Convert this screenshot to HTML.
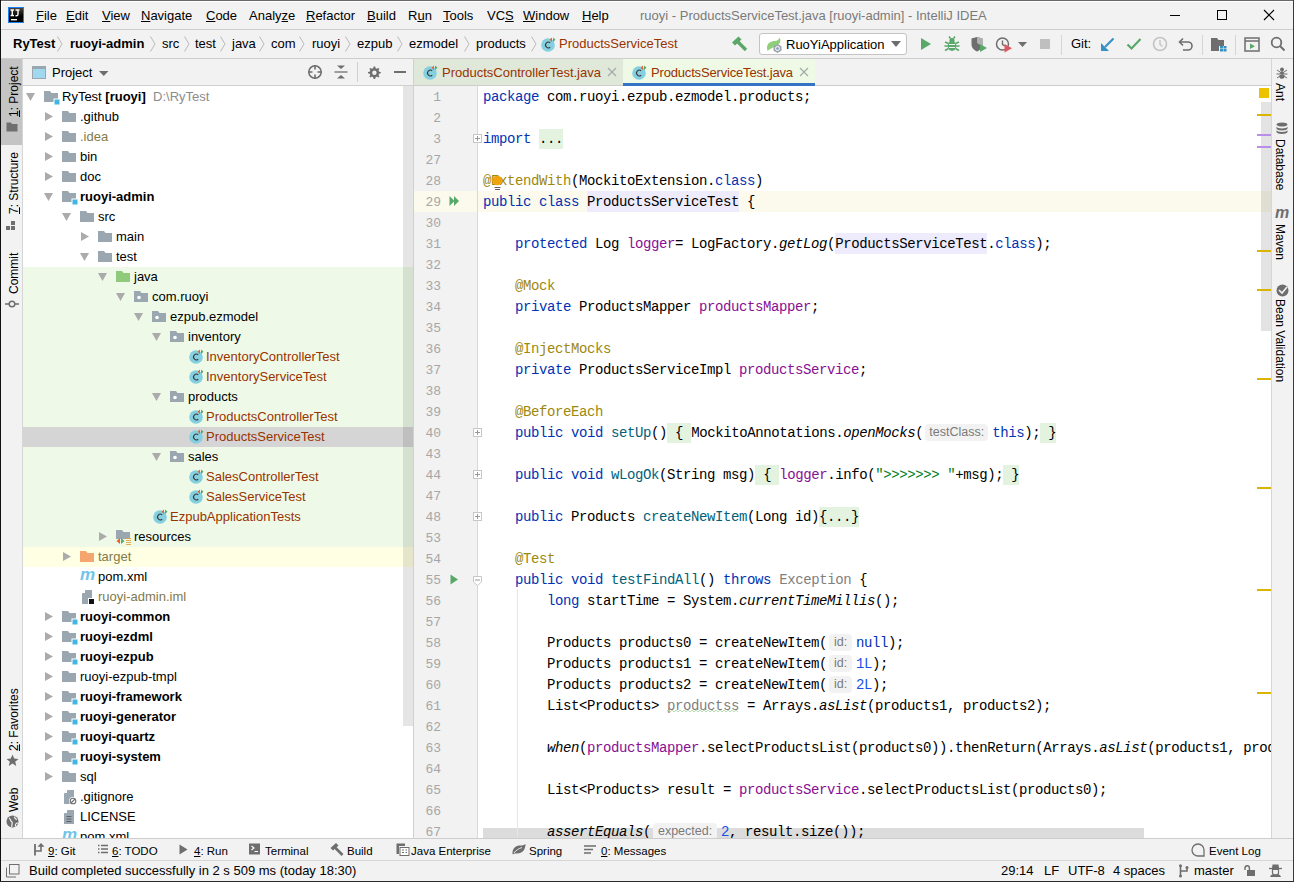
<!DOCTYPE html><html><head><meta charset="utf-8"><style>
*{margin:0;padding:0;box-sizing:border-box}
html,body{width:1294px;height:882px;overflow:hidden;background:#f2f2f2}
body{position:relative;font-family:"Liberation Sans",sans-serif;font-size:13px;color:#000}
.a{position:absolute}
.t{position:absolute;white-space:pre;line-height:16px;font-size:13px}
.b{font-weight:bold}
.m{font-family:"Liberation Mono",monospace}
.cl{position:absolute;left:69px;white-space:pre;font-family:"Liberation Mono",monospace;font-size:14px;letter-spacing:-0.4px;line-height:21px;height:21px}
.k{color:#0033b3}.an{color:#9e880d}.f{color:#871094}.md{color:#00627a}.s{color:#067d17}.n{color:#1750eb}.i{font-style:italic}.g{color:#808080}
.fd{background:#e4f2e0;display:inline-block;height:20px;vertical-align:top}
.hl{background:#edebfc;display:inline-block;height:21px;vertical-align:top;position:relative;top:-1px}.hl>span{position:relative;top:1px}
.ih{display:inline-block;vertical-align:top;margin:1px 4px 0 2px;height:17px;line-height:17px;background:#f2f2f2;border-radius:4px;color:#7a7a7a;font-family:"Liberation Sans",sans-serif;font-size:12.5px;letter-spacing:0;text-align:center}
.ln{position:absolute;left:0;width:27px;text-align:right;font-family:"Liberation Mono",monospace;font-size:13px;color:#a6a6a6;line-height:21px}

</style></head><body>
<div class="a" style="left:0px;top:0px;width:1294px;height:1px;background:#696969;"></div>
<div class="a" style="left:0px;top:0px;width:1px;height:882px;background:#121212;"></div>
<div class="a" style="left:1293px;top:0px;width:1px;height:882px;background:#3a3a3a;"></div>
<div class="a" style="left:0px;top:881px;width:1294px;height:1px;background:#2a2a2a;"></div>
<div class="a" style="left:1px;top:1px;width:1292px;height:1px;background:#ffffff;"></div>
<div class="a" style="left:1px;top:1px;width:1px;height:29px;background:#ffffff;"></div>
<div class="a" style="left:1px;top:29px;width:1292px;height:1px;background:#cdcdcd;"></div>
<div class="a" style="left:8px;top:7px;width:16px;height:16px;background:linear-gradient(#4a4038,#000 60%);border:1px solid #1a7ff0"></div>
<svg class="a" style="left:9px;top:8px" width="14" height="14"><path d="M1.5 2H5M3.25 2V7.5M1.5 7.5H5M6.5 2H10.5M9 2V6.2Q9 7.8 7.2 7.8H6.5" fill="none" stroke="#fff" stroke-width="1.4"/><rect x="2" y="11" width="6" height="1.4" fill="#fff"/></svg>
<div class="t" style="left:36px;top:8px;"><u>F</u>ile</div>
<div class="t" style="left:66px;top:8px;"><u>E</u>dit</div>
<div class="t" style="left:102px;top:8px;"><u>V</u>iew</div>
<div class="t" style="left:141px;top:8px;"><u>N</u>avigate</div>
<div class="t" style="left:206px;top:8px;"><u>C</u>ode</div>
<div class="t" style="left:249px;top:8px;">Analy<u>z</u>e</div>
<div class="t" style="left:306px;top:8px;"><u>R</u>efactor</div>
<div class="t" style="left:367px;top:8px;"><u>B</u>uild</div>
<div class="t" style="left:408px;top:8px;">R<u>u</u>n</div>
<div class="t" style="left:443px;top:8px;"><u>T</u>ools</div>
<div class="t" style="left:487px;top:8px;">VC<u>S</u></div>
<div class="t" style="left:523px;top:8px;"><u>W</u>indow</div>
<div class="t" style="left:582px;top:8px;"><u>H</u>elp</div>
<div class="t" style="left:640px;top:8px;color:#7a7a7a">ruoyi - ProductsServiceTest.java [ruoyi-admin] - IntelliJ IDEA</div>
<div class="a" style="left:1170px;top:15px;width:10px;height:1px;background:#000;"></div>
<div class="a" style="left:1217px;top:10px;width:10px;height:10px;border:1px solid #000"></div>
<svg class="a" style="left:1262px;top:8px" width="14" height="14"><path d="M2 2L12 12M12 2L2 12" stroke="#000" stroke-width="1.2"/></svg>
<div class="a" style="left:1px;top:58px;width:1292px;height:1px;background:#cdcdcd;"></div>
<div class="t" style="left:13px;top:36px;font-weight:bold">RyTest</div>
<div class="t" style="left:70px;top:36px;font-weight:bold">ruoyi-admin</div>
<div class="t" style="left:162px;top:36px;">src</div>
<div class="t" style="left:195px;top:36px;">test</div>
<div class="t" style="left:232px;top:36px;">java</div>
<div class="t" style="left:271px;top:36px;">com</div>
<div class="t" style="left:312px;top:36px;">ruoyi</div>
<div class="t" style="left:357px;top:36px;">ezpub</div>
<div class="t" style="left:409px;top:36px;">ezmodel</div>
<div class="t" style="left:476px;top:36px;">products</div>
<svg class="a" style="left:57px;top:36px" width="6" height="16"><path d="M0.5 0.5L5 8L0.5 15.5" fill="none" stroke="#b9b9b9" stroke-width="1"/></svg>
<svg class="a" style="left:150px;top:36px" width="6" height="16"><path d="M0.5 0.5L5 8L0.5 15.5" fill="none" stroke="#b9b9b9" stroke-width="1"/></svg>
<svg class="a" style="left:184px;top:36px" width="6" height="16"><path d="M0.5 0.5L5 8L0.5 15.5" fill="none" stroke="#b9b9b9" stroke-width="1"/></svg>
<svg class="a" style="left:220px;top:36px" width="6" height="16"><path d="M0.5 0.5L5 8L0.5 15.5" fill="none" stroke="#b9b9b9" stroke-width="1"/></svg>
<svg class="a" style="left:259px;top:36px" width="6" height="16"><path d="M0.5 0.5L5 8L0.5 15.5" fill="none" stroke="#b9b9b9" stroke-width="1"/></svg>
<svg class="a" style="left:299px;top:36px" width="6" height="16"><path d="M0.5 0.5L5 8L0.5 15.5" fill="none" stroke="#b9b9b9" stroke-width="1"/></svg>
<svg class="a" style="left:345px;top:36px" width="6" height="16"><path d="M0.5 0.5L5 8L0.5 15.5" fill="none" stroke="#b9b9b9" stroke-width="1"/></svg>
<svg class="a" style="left:397px;top:36px" width="6" height="16"><path d="M0.5 0.5L5 8L0.5 15.5" fill="none" stroke="#b9b9b9" stroke-width="1"/></svg>
<svg class="a" style="left:464px;top:36px" width="6" height="16"><path d="M0.5 0.5L5 8L0.5 15.5" fill="none" stroke="#b9b9b9" stroke-width="1"/></svg>
<svg class="a" style="left:531px;top:36px" width="6" height="16"><path d="M0.5 0.5L5 8L0.5 15.5" fill="none" stroke="#b9b9b9" stroke-width="1"/></svg>
<svg class="a" style="left:541px;top:36px" width="16" height="16"><circle cx="7" cy="9" r="6.8" fill="#84cfe0"/><path d="M9.2 6.7A2.9 2.9 0 1 0 9.2 11.3" fill="none" stroke="#3a3a3a" stroke-width="1.1"/><path d="M11 1.5L8.6 3.8L11 6Z" fill="#e5642e"/><path d="M12 1.5L14.5 3.8L12 6Z" fill="#59a869"/></svg>
<div class="t" style="left:559px;top:36px;color:#993300">ProductsServiceTest</div>
<svg class="a" style="left:731px;top:36px" width="17" height="16"><path d="M1 6.5L7.5 0.5L10.5 3.5L4 9.5Z" fill="#59a869"/><path d="M6.5 5.5L15 14" stroke="#59a869" stroke-width="3.4"/></svg>
<div class="a" style="left:759px;top:33px;width:148px;height:22px;background:#fff;border:1px solid #c4c4c4;border-radius:3px"></div>
<svg class="a" style="left:766px;top:37px" width="18" height="16"><path d="M1 11C1 6 5 4 9 4C11 4 13 2.5 13.5 0.5C15 3 14.5 6 12.5 7.5C11 9 9 9.5 6 11C4 12 2.5 13 1.5 14Z" fill="#8fcf7a"/><path d="M11.5 7L15.5 9.3V13.7L11.5 16L7.5 13.7V9.3Z" fill="#9aa7b0"/><circle cx="11.5" cy="11.5" r="2" fill="none" stroke="#fff" stroke-width="1"/></svg>
<div class="t" style="left:786px;top:37px;">RuoYiApplication</div>
<svg class="a" style="left:891px;top:41px" width="10" height="6"><path d="M0 0H10L5 6Z" fill="#6e6e6e"/></svg>
<svg class="a" style="left:920px;top:37px" width="12" height="14"><path d="M1 1L11 7L1 13Z" fill="#59a869"/></svg>
<svg class="a" style="left:944px;top:36px" width="16" height="16"><ellipse cx="8" cy="10" rx="4.2" ry="5" fill="#59a869"/><circle cx="8" cy="4.5" r="2.6" fill="#59a869"/><path d="M1 6L4.5 7.5M15 6L11.5 7.5M0.5 10H4M15.5 10H12M1 14.5L4.5 12.5M15 14.5L11.5 12.5M5 0.5L6.5 2.5M11 0.5L9.5 2.5" stroke="#59a869" stroke-width="1.5"/><path d="M5 8.5H11M5 11.5H11" stroke="#f2f2f2" stroke-width="1"/></svg>
<svg class="a" style="left:970px;top:36px" width="18" height="17"><path d="M1.5 2.5L7 1L12.5 2.5V8C12.5 12 10 14 7 15.5C4 14 1.5 12 1.5 8Z" fill="#6e6e6e"/><path d="M7 1L12.5 2.5V8C12.5 9 12.3 9.5 12 10.3L7 7Z" fill="#b0b0b0"/><path d="M10 8L17 12L10 16Z" fill="#59a869"/></svg>
<svg class="a" style="left:995px;top:36px" width="18" height="17"><circle cx="7.5" cy="8" r="6" fill="none" stroke="#6e6e6e" stroke-width="1.5"/><path d="M7.5 4.5V8.5L10 10" fill="none" stroke="#6e6e6e" stroke-width="1.4"/><path d="M9.5 8L17 12.3L9.5 16.5Z" fill="#db5860"/></svg>
<svg class="a" style="left:1018px;top:42px" width="9" height="5"><path d="M0 0H9L4.5 5Z" fill="#6e6e6e"/></svg>
<div class="a" style="left:1040px;top:39px;width:10px;height:10px;background:#bfbfbf;"></div>
<div class="a" style="left:1061px;top:35px;width:1px;height:20px;background:#d5d5d5;"></div>
<div class="t" style="left:1071px;top:36px;">Git:</div>
<svg class="a" style="left:1100px;top:37px" width="15" height="15"><path d="M13.5 1.5L5 10" stroke="#3592c4" stroke-width="2.2"/><path d="M1 6L1 14L9 14Z" fill="#3592c4"/></svg>
<svg class="a" style="left:1126px;top:37px" width="16" height="14"><path d="M1.5 7.5L5.5 11.5L14.5 2" fill="none" stroke="#59a869" stroke-width="2.2"/></svg>
<svg class="a" style="left:1152px;top:36px" width="16" height="16"><circle cx="8" cy="8" r="6.5" fill="none" stroke="#c4c4c4" stroke-width="1.6"/><path d="M8 4V8.5L10.5 10.5" fill="none" stroke="#c4c4c4" stroke-width="1.4"/></svg>
<svg class="a" style="left:1178px;top:37px" width="16" height="15"><path d="M5 1.5L1.5 5L5 8.5" fill="none" stroke="#6e6e6e" stroke-width="1.6"/><path d="M2 5H10A4 4 0 0 1 10 13H5" fill="none" stroke="#6e6e6e" stroke-width="1.6"/></svg>
<div class="a" style="left:1202px;top:35px;width:1px;height:20px;background:#d5d5d5;"></div>
<svg class="a" style="left:1210px;top:37px" width="17" height="15"><path d="M1 1H7L8.5 3H14V9H9V14H1Z" fill="#6e6e6e"/><rect x="10" y="9" width="3" height="2.5" fill="#3592c4"/><rect x="13.5" y="9" width="3" height="2.5" fill="#3592c4"/><rect x="10" y="12" width="3" height="2.5" fill="#3592c4"/><rect x="13.5" y="12" width="3" height="2.5" fill="#3592c4"/></svg>
<div class="a" style="left:1235px;top:35px;width:1px;height:20px;background:#d5d5d5;"></div>
<svg class="a" style="left:1244px;top:37px" width="16" height="15"><rect x="1" y="1" width="14" height="13" fill="none" stroke="#6e6e6e" stroke-width="1.5"/><path d="M1 4H15" stroke="#6e6e6e" stroke-width="1.5"/><path d="M6 6.5L11 9.2L6 12Z" fill="#59a869"/></svg>
<svg class="a" style="left:1270px;top:36px" width="16" height="16"><circle cx="6.5" cy="6.5" r="4.8" fill="none" stroke="#6e6e6e" stroke-width="1.8"/><path d="M10 10L14.5 14.5" stroke="#6e6e6e" stroke-width="2"/></svg>
<div class="a" style="left:1px;top:59px;width:21px;height:779px;background:#f2f2f2;"></div>
<div class="a" style="left:22px;top:59px;width:1px;height:779px;background:#d6d6d6;"></div>
<div class="a" style="left:1px;top:59px;width:21px;height:86px;background:#c4c4c4;"></div>
<div class="t" style="left:5.5px;top:117px;font-size:12px;transform:rotate(-90deg);transform-origin:0 0;"><u>1</u>: Project</div>
<svg class="a" style="left:6px;top:122px" width="12" height="10"><path d="M0.5 0.5H5L6 2H11.5V9.5H0.5Z" fill="#6e6e6e"/></svg>
<div class="t" style="left:5.5px;top:214px;font-size:12px;transform:rotate(-90deg);transform-origin:0 0;"><u>7</u>: Structure</div>
<svg class="a" style="left:6px;top:221px" width="11" height="10"><rect x="0" y="5" width="4" height="4" fill="#6e6e6e"/><rect x="5" y="5" width="4" height="4" fill="#6e6e6e"/><rect x="5" y="0" width="4" height="4" fill="#6e6e6e"/></svg>
<div class="t" style="left:5.5px;top:294px;font-size:12px;transform:rotate(-90deg);transform-origin:0 0;">Commit</div>
<svg class="a" style="left:5px;top:299px" width="14" height="10"><circle cx="7" cy="5" r="2.8" fill="none" stroke="#6e6e6e" stroke-width="1.5"/><path d="M0 5H4M10 5H14" stroke="#6e6e6e" stroke-width="1.5"/></svg>
<div class="t" style="left:5.5px;top:751px;font-size:12px;transform:rotate(-90deg);transform-origin:0 0;"><u>2</u>: Favorites</div>
<svg class="a" style="left:6px;top:754px" width="13" height="13"><path d="M6.5 0.5L8.2 4.6L12.5 4.9L9.2 7.7L10.3 12L6.5 9.6L2.7 12L3.8 7.7L0.5 4.9L4.8 4.6Z" fill="#6e6e6e"/></svg>
<div class="t" style="left:5.5px;top:812px;font-size:12px;transform:rotate(-90deg);transform-origin:0 0;">Web</div>
<svg class="a" style="left:6px;top:815px" width="13" height="13"><circle cx="6.5" cy="6.5" r="6" fill="#6e6e6e"/><path d="M3 3C5 4 4 6 6 7C7 8 5 10 6 12M9 1.5C8 3 9.5 4 11 4.5M12 8C10 8 9 9.5 9.5 11.5" fill="none" stroke="#f2f2f2" stroke-width="1.2"/></svg>
<div class="a" style="left:23px;top:59px;width:390px;height:26px;background:#f2f2f2;"></div>
<div class="a" style="left:23px;top:85px;width:390px;height:1px;background:#d0d0d0;"></div>
<div class="a" style="left:23px;top:86px;width:390px;height:752px;background:#fff;"></div>
<div class="a" style="left:413px;top:59px;width:1px;height:779px;background:#d0d0d0;"></div>
<svg class="a" style="left:32px;top:66px" width="15" height="14"><rect x="0.5" y="0.5" width="13" height="12" fill="#9fd8ef" stroke="#9aa7b0"/><rect x="0.5" y="0.5" width="13" height="2.5" fill="#9aa7b0"/></svg>
<div class="t" style="left:52px;top:65px;">Project</div>
<svg class="a" style="left:99px;top:71px" width="10" height="6"><path d="M0 0H9.5L4.75 5Z" fill="#6e6e6e"/></svg>
<svg class="a" style="left:307px;top:64px" width="16" height="16"><circle cx="8" cy="8" r="6.2" fill="none" stroke="#6e6e6e" stroke-width="1.5"/><path d="M8 1V5.5M8 10.5V15M1 8H5.5M10.5 8H15" stroke="#6e6e6e" stroke-width="1.6"/></svg>
<svg class="a" style="left:334px;top:65px" width="14" height="14"><path d="M0.5 7H13.5" stroke="#6e6e6e" stroke-width="1.3"/><path d="M3 0.5H11L7 4Z M3 13.5H11L7 10Z" fill="#6e6e6e"/></svg>
<div class="a" style="left:357px;top:62px;width:1px;height:20px;background:#d0d0d0;"></div>
<svg class="a" style="left:367px;top:65px" width="14" height="14"><path d="M7 1.5L8.2 1.5L8.6 3.2L10 3.8L11.5 2.9L12.4 3.8L11.5 5.3L12.1 6.7L13.8 7.1V8.3L12.1 8.7L11.5 10.1L12.4 11.6L11.5 12.5L10 11.6L8.6 12.2L8.2 13.9H6.6L6.2 12.2L4.8 11.6L3.3 12.5L2.4 11.6L3.3 10.1L2.7 8.7L1 8.3V7.1L2.7 6.7L3.3 5.3L2.4 3.8L3.3 2.9L4.8 3.8L6.2 3.2L6.6 1.5Z" fill="#6e6e6e"/><circle cx="7.4" cy="7.7" r="2.2" fill="#f2f2f2"/></svg>
<div class="a" style="left:394px;top:71px;width:12px;height:2px;background:#6e6e6e;"></div>
<div class="a" style="left:23px;top:267px;width:390px;height:280px;background:#eefae7;"></div>
<div class="a" style="left:23px;top:427px;width:390px;height:20px;background:#d5d5d5;"></div>
<div class="a" style="left:23px;top:547px;width:390px;height:20px;background:#ffffe4;"></div>
<div class="a" style="left:23px;top:86px;width:390px;height:752px;overflow:hidden">
<svg class="a" style="left:3px;top:7px" width="9" height="8"><path d="M0 0H9L4.5 8Z" fill="#ababab"/></svg>
<svg class="a" style="left:21px;top:5px" width="16" height="14"><path d="M0 0H6L7.5 2H14V11H0Z" fill="#9aa7b0"/><rect x="10" y="8" width="6" height="6" fill="#40b6e0" stroke="#fff" stroke-width="1"/></svg>
<div class="t" style="left:39px;top:3px;">RyTest <b>[ruoyi]</b>  <span style="color:#8c8c8c">D:\RyTest</span></div>
<svg class="a" style="left:22px;top:26px" width="8" height="9"><path d="M0 0L8 4.5L0 9Z" fill="#ababab"/></svg>
<svg class="a" style="left:39px;top:25px" width="15" height="12"><path d="M0 0H6L7.5 2H14V11H0Z" fill="#9aa7b0"/></svg>
<div class="t" style="left:57px;top:23px;">.github</div>
<svg class="a" style="left:22px;top:46px" width="8" height="9"><path d="M0 0L8 4.5L0 9Z" fill="#ababab"/></svg>
<svg class="a" style="left:39px;top:45px" width="15" height="12"><path d="M0 0H6L7.5 2H14V11H0Z" fill="#9aa7b0"/></svg>
<div class="t" style="left:57px;top:43px;color:#827a4b">.idea</div>
<svg class="a" style="left:22px;top:66px" width="8" height="9"><path d="M0 0L8 4.5L0 9Z" fill="#ababab"/></svg>
<svg class="a" style="left:39px;top:65px" width="15" height="12"><path d="M0 0H6L7.5 2H14V11H0Z" fill="#9aa7b0"/></svg>
<div class="t" style="left:57px;top:63px;">bin</div>
<svg class="a" style="left:22px;top:86px" width="8" height="9"><path d="M0 0L8 4.5L0 9Z" fill="#ababab"/></svg>
<svg class="a" style="left:39px;top:85px" width="15" height="12"><path d="M0 0H6L7.5 2H14V11H0Z" fill="#9aa7b0"/></svg>
<div class="t" style="left:57px;top:83px;">doc</div>
<svg class="a" style="left:21px;top:107px" width="9" height="8"><path d="M0 0H9L4.5 8Z" fill="#ababab"/></svg>
<svg class="a" style="left:39px;top:105px" width="16" height="14"><path d="M0 0H6L7.5 2H14V11H0Z" fill="#9aa7b0"/><rect x="10" y="8" width="6" height="6" fill="#40b6e0" stroke="#fff" stroke-width="1"/></svg>
<div class="t" style="left:57px;top:103px;"><b>ruoyi-admin</b></div>
<svg class="a" style="left:39px;top:127px" width="9" height="8"><path d="M0 0H9L4.5 8Z" fill="#ababab"/></svg>
<svg class="a" style="left:57px;top:125px" width="15" height="12"><path d="M0 0H6L7.5 2H14V11H0Z" fill="#9aa7b0"/></svg>
<div class="t" style="left:75px;top:123px;">src</div>
<svg class="a" style="left:58px;top:146px" width="8" height="9"><path d="M0 0L8 4.5L0 9Z" fill="#ababab"/></svg>
<svg class="a" style="left:75px;top:145px" width="15" height="12"><path d="M0 0H6L7.5 2H14V11H0Z" fill="#9aa7b0"/></svg>
<div class="t" style="left:93px;top:143px;">main</div>
<svg class="a" style="left:57px;top:167px" width="9" height="8"><path d="M0 0H9L4.5 8Z" fill="#ababab"/></svg>
<svg class="a" style="left:75px;top:165px" width="15" height="12"><path d="M0 0H6L7.5 2H14V11H0Z" fill="#9aa7b0"/></svg>
<div class="t" style="left:93px;top:163px;">test</div>
<svg class="a" style="left:75px;top:187px" width="9" height="8"><path d="M0 0H9L4.5 8Z" fill="#ababab"/></svg>
<svg class="a" style="left:93px;top:185px" width="15" height="12"><path d="M0 0H6L7.5 2H14V11H0Z" fill="#8fcb7b"/></svg>
<div class="t" style="left:111px;top:183px;">java</div>
<svg class="a" style="left:93px;top:207px" width="9" height="8"><path d="M0 0H9L4.5 8Z" fill="#ababab"/></svg>
<svg class="a" style="left:111px;top:205px" width="15" height="12"><path d="M0 0H6L7.5 2H14V11H0Z" fill="#9aa7b0"/><circle cx="5" cy="6.5" r="1.8" fill="#fff"/></svg>
<div class="t" style="left:129px;top:203px;">com.ruoyi</div>
<svg class="a" style="left:111px;top:227px" width="9" height="8"><path d="M0 0H9L4.5 8Z" fill="#ababab"/></svg>
<svg class="a" style="left:129px;top:225px" width="15" height="12"><path d="M0 0H6L7.5 2H14V11H0Z" fill="#9aa7b0"/><circle cx="5" cy="6.5" r="1.8" fill="#fff"/></svg>
<div class="t" style="left:147px;top:223px;">ezpub.ezmodel</div>
<svg class="a" style="left:129px;top:247px" width="9" height="8"><path d="M0 0H9L4.5 8Z" fill="#ababab"/></svg>
<svg class="a" style="left:147px;top:245px" width="15" height="12"><path d="M0 0H6L7.5 2H14V11H0Z" fill="#9aa7b0"/><circle cx="5" cy="6.5" r="1.8" fill="#fff"/></svg>
<div class="t" style="left:165px;top:243px;">inventory</div>
<svg class="a" style="left:166px;top:262px" width="16" height="16"><circle cx="7" cy="9" r="6.8" fill="#84cfe0"/><path d="M9.2 6.7A2.9 2.9 0 1 0 9.2 11.3" fill="none" stroke="#3a3a3a" stroke-width="1.1"/><path d="M11 1.5L8.6 3.8L11 6Z" fill="#e5642e"/><path d="M12 1.5L14.5 3.8L12 6Z" fill="#59a869"/></svg>
<div class="t" style="left:183px;top:263px;color:#993300">InventoryControllerTest</div>
<svg class="a" style="left:166px;top:282px" width="16" height="16"><circle cx="7" cy="9" r="6.8" fill="#84cfe0"/><path d="M9.2 6.7A2.9 2.9 0 1 0 9.2 11.3" fill="none" stroke="#3a3a3a" stroke-width="1.1"/><path d="M11 1.5L8.6 3.8L11 6Z" fill="#e5642e"/><path d="M12 1.5L14.5 3.8L12 6Z" fill="#59a869"/></svg>
<div class="t" style="left:183px;top:283px;color:#993300">InventoryServiceTest</div>
<svg class="a" style="left:129px;top:307px" width="9" height="8"><path d="M0 0H9L4.5 8Z" fill="#ababab"/></svg>
<svg class="a" style="left:147px;top:305px" width="15" height="12"><path d="M0 0H6L7.5 2H14V11H0Z" fill="#9aa7b0"/><circle cx="5" cy="6.5" r="1.8" fill="#fff"/></svg>
<div class="t" style="left:165px;top:303px;">products</div>
<svg class="a" style="left:166px;top:322px" width="16" height="16"><circle cx="7" cy="9" r="6.8" fill="#84cfe0"/><path d="M9.2 6.7A2.9 2.9 0 1 0 9.2 11.3" fill="none" stroke="#3a3a3a" stroke-width="1.1"/><path d="M11 1.5L8.6 3.8L11 6Z" fill="#e5642e"/><path d="M12 1.5L14.5 3.8L12 6Z" fill="#59a869"/></svg>
<div class="t" style="left:183px;top:323px;color:#993300">ProductsControllerTest</div>
<svg class="a" style="left:166px;top:342px" width="16" height="16"><circle cx="7" cy="9" r="6.8" fill="#84cfe0"/><path d="M9.2 6.7A2.9 2.9 0 1 0 9.2 11.3" fill="none" stroke="#3a3a3a" stroke-width="1.1"/><path d="M11 1.5L8.6 3.8L11 6Z" fill="#e5642e"/><path d="M12 1.5L14.5 3.8L12 6Z" fill="#59a869"/></svg>
<div class="t" style="left:183px;top:343px;color:#993300">ProductsServiceTest</div>
<svg class="a" style="left:129px;top:367px" width="9" height="8"><path d="M0 0H9L4.5 8Z" fill="#ababab"/></svg>
<svg class="a" style="left:147px;top:365px" width="15" height="12"><path d="M0 0H6L7.5 2H14V11H0Z" fill="#9aa7b0"/><circle cx="5" cy="6.5" r="1.8" fill="#fff"/></svg>
<div class="t" style="left:165px;top:363px;">sales</div>
<svg class="a" style="left:166px;top:382px" width="16" height="16"><circle cx="7" cy="9" r="6.8" fill="#84cfe0"/><path d="M9.2 6.7A2.9 2.9 0 1 0 9.2 11.3" fill="none" stroke="#3a3a3a" stroke-width="1.1"/><path d="M11 1.5L8.6 3.8L11 6Z" fill="#e5642e"/><path d="M12 1.5L14.5 3.8L12 6Z" fill="#59a869"/></svg>
<div class="t" style="left:183px;top:383px;color:#993300">SalesControllerTest</div>
<svg class="a" style="left:166px;top:402px" width="16" height="16"><circle cx="7" cy="9" r="6.8" fill="#84cfe0"/><path d="M9.2 6.7A2.9 2.9 0 1 0 9.2 11.3" fill="none" stroke="#3a3a3a" stroke-width="1.1"/><path d="M11 1.5L8.6 3.8L11 6Z" fill="#e5642e"/><path d="M12 1.5L14.5 3.8L12 6Z" fill="#59a869"/></svg>
<div class="t" style="left:183px;top:403px;color:#993300">SalesServiceTest</div>
<svg class="a" style="left:130px;top:422px" width="16" height="16"><circle cx="7" cy="9" r="6.8" fill="#84cfe0"/><path d="M9.2 6.7A2.9 2.9 0 1 0 9.2 11.3" fill="none" stroke="#3a3a3a" stroke-width="1.1"/><path d="M11 1.5L8.6 3.8L11 6Z" fill="#e5642e"/><path d="M12 1.5L14.5 3.8L12 6Z" fill="#59a869"/></svg>
<div class="t" style="left:147px;top:423px;color:#993300">EzpubApplicationTests</div>
<svg class="a" style="left:76px;top:446px" width="8" height="9"><path d="M0 0L8 4.5L0 9Z" fill="#ababab"/></svg>
<svg class="a" style="left:93px;top:444px" width="16" height="15"><path d="M0 0H6L7.5 2H14V9H0Z" fill="#9aa7b0"/><path d="M4 8L0.5 11L4 14Z" fill="#e5642e"/><path d="M5 8L8.5 11L5 14Z" fill="#59a869"/><path d="M10 8.5H15M10 10.5H15M10 12.5H15M10 14.5H15" stroke="#e0a040" stroke-width="0.9"/></svg>
<div class="t" style="left:111px;top:443px;">resources</div>
<svg class="a" style="left:40px;top:466px" width="8" height="9"><path d="M0 0L8 4.5L0 9Z" fill="#ababab"/></svg>
<svg class="a" style="left:57px;top:465px" width="15" height="12"><path d="M0 0H6L7.5 2H14V11H0Z" fill="#f4a66e"/></svg>
<div class="t" style="left:75px;top:463px;color:#827a4b">target</div>
<div class="a" style="left:57px;top:481px;font-family:&quot;Liberation Sans&quot;;font-style:italic;font-weight:bold;font-size:17px;color:#70c4ea;line-height:16px">m</div>
<div class="t" style="left:75px;top:483px;">pom.xml</div>
<svg class="a" style="left:59px;top:504px" width="14" height="15"><path d="M3.5 0H10V14H0V3.5Z" fill="#9aa7b0"/><path d="M0 3L3 0V3Z" fill="#fff"/><rect x="6" y="8" width="7" height="7" fill="#fff"/><rect x="7" y="9" width="5" height="5" fill="#111"/></svg>
<div class="t" style="left:75px;top:503px;color:#827a4b">ruoyi-admin.iml</div>
<svg class="a" style="left:22px;top:526px" width="8" height="9"><path d="M0 0L8 4.5L0 9Z" fill="#ababab"/></svg>
<svg class="a" style="left:39px;top:525px" width="16" height="14"><path d="M0 0H6L7.5 2H14V11H0Z" fill="#9aa7b0"/><rect x="10" y="8" width="6" height="6" fill="#40b6e0" stroke="#fff" stroke-width="1"/></svg>
<div class="t" style="left:57px;top:523px;"><b>ruoyi-common</b></div>
<svg class="a" style="left:22px;top:546px" width="8" height="9"><path d="M0 0L8 4.5L0 9Z" fill="#ababab"/></svg>
<svg class="a" style="left:39px;top:545px" width="16" height="14"><path d="M0 0H6L7.5 2H14V11H0Z" fill="#9aa7b0"/><rect x="10" y="8" width="6" height="6" fill="#40b6e0" stroke="#fff" stroke-width="1"/></svg>
<div class="t" style="left:57px;top:543px;"><b>ruoyi-ezdml</b></div>
<svg class="a" style="left:22px;top:566px" width="8" height="9"><path d="M0 0L8 4.5L0 9Z" fill="#ababab"/></svg>
<svg class="a" style="left:39px;top:565px" width="16" height="14"><path d="M0 0H6L7.5 2H14V11H0Z" fill="#9aa7b0"/><rect x="10" y="8" width="6" height="6" fill="#40b6e0" stroke="#fff" stroke-width="1"/></svg>
<div class="t" style="left:57px;top:563px;"><b>ruoyi-ezpub</b></div>
<svg class="a" style="left:22px;top:586px" width="8" height="9"><path d="M0 0L8 4.5L0 9Z" fill="#ababab"/></svg>
<svg class="a" style="left:39px;top:585px" width="15" height="12"><path d="M0 0H6L7.5 2H14V11H0Z" fill="#9aa7b0"/></svg>
<div class="t" style="left:57px;top:583px;">ruoyi-ezpub-tmpl</div>
<svg class="a" style="left:22px;top:606px" width="8" height="9"><path d="M0 0L8 4.5L0 9Z" fill="#ababab"/></svg>
<svg class="a" style="left:39px;top:605px" width="16" height="14"><path d="M0 0H6L7.5 2H14V11H0Z" fill="#9aa7b0"/><rect x="10" y="8" width="6" height="6" fill="#40b6e0" stroke="#fff" stroke-width="1"/></svg>
<div class="t" style="left:57px;top:603px;"><b>ruoyi-framework</b></div>
<svg class="a" style="left:22px;top:626px" width="8" height="9"><path d="M0 0L8 4.5L0 9Z" fill="#ababab"/></svg>
<svg class="a" style="left:39px;top:625px" width="16" height="14"><path d="M0 0H6L7.5 2H14V11H0Z" fill="#9aa7b0"/><rect x="10" y="8" width="6" height="6" fill="#40b6e0" stroke="#fff" stroke-width="1"/></svg>
<div class="t" style="left:57px;top:623px;"><b>ruoyi-generator</b></div>
<svg class="a" style="left:22px;top:646px" width="8" height="9"><path d="M0 0L8 4.5L0 9Z" fill="#ababab"/></svg>
<svg class="a" style="left:39px;top:645px" width="16" height="14"><path d="M0 0H6L7.5 2H14V11H0Z" fill="#9aa7b0"/><rect x="10" y="8" width="6" height="6" fill="#40b6e0" stroke="#fff" stroke-width="1"/></svg>
<div class="t" style="left:57px;top:643px;"><b>ruoyi-quartz</b></div>
<svg class="a" style="left:22px;top:666px" width="8" height="9"><path d="M0 0L8 4.5L0 9Z" fill="#ababab"/></svg>
<svg class="a" style="left:39px;top:665px" width="16" height="14"><path d="M0 0H6L7.5 2H14V11H0Z" fill="#9aa7b0"/><rect x="10" y="8" width="6" height="6" fill="#40b6e0" stroke="#fff" stroke-width="1"/></svg>
<div class="t" style="left:57px;top:663px;"><b>ruoyi-system</b></div>
<svg class="a" style="left:22px;top:686px" width="8" height="9"><path d="M0 0L8 4.5L0 9Z" fill="#ababab"/></svg>
<svg class="a" style="left:39px;top:685px" width="15" height="12"><path d="M0 0H6L7.5 2H14V11H0Z" fill="#9aa7b0"/></svg>
<div class="t" style="left:57px;top:683px;">sql</div>
<svg class="a" style="left:41px;top:704px" width="15" height="15"><path d="M3.5 0H10V14H0V3.5Z" fill="#9aa7b0"/><path d="M0 3L3 0V3Z" fill="#fff"/><circle cx="9" cy="11" r="4" fill="#fff"/><circle cx="9" cy="11" r="2.8" fill="none" stroke="#6e6e6e" stroke-width="1.1"/><path d="M7 13L11 9" stroke="#6e6e6e" stroke-width="1.1"/></svg>
<div class="t" style="left:57px;top:703px;">.gitignore</div>
<svg class="a" style="left:41px;top:724px" width="12" height="15"><path d="M3.5 0H10V14H0V3.5Z" fill="#9aa7b0"/><path d="M0 3L3 0V3Z" fill="#fff"/><path d="M2.5 6.5H7.5M2.5 9H7.5M2.5 11.5H7.5" stroke="#5a5a5a" stroke-width="0.9"/></svg>
<div class="t" style="left:57px;top:723px;">LICENSE</div>
<div class="a" style="left:39px;top:741px;font-family:&quot;Liberation Sans&quot;;font-style:italic;font-weight:bold;font-size:17px;color:#70c4ea;line-height:16px">m</div>
<div class="t" style="left:57px;top:743px;">pom.xml</div>
</div>
<div class="a" style="left:403px;top:86px;width:10px;height:640px;background:rgba(0,0,0,0.1);"></div>
<div class="a" style="left:414px;top:59px;width:857px;height:26px;background:#f2f2f2;"></div>
<div class="a" style="left:414px;top:85px;width:857px;height:1px;background:#cdcdcd;"></div>
<div class="a" style="left:414px;top:59px;width:209px;height:26px;background:#dfe8d9;"></div>
<div class="a" style="left:623px;top:59px;width:192px;height:26px;background:#eefae6;"></div>
<div class="a" style="left:623px;top:83px;width:192px;height:3px;background:#3574c4;"></div>
<svg class="a" style="left:423px;top:64px" width="16" height="16"><circle cx="7" cy="9" r="6.8" fill="#84cfe0"/><path d="M9.2 6.7A2.9 2.9 0 1 0 9.2 11.3" fill="none" stroke="#3a3a3a" stroke-width="1.1"/><path d="M11 1.5L8.6 3.8L11 6Z" fill="#e5642e"/><path d="M12 1.5L14.5 3.8L12 6Z" fill="#59a869"/></svg>
<div class="t" style="left:442px;top:65px;color:#993300">ProductsControllerTest.java</div>
<svg class="a" style="left:607px;top:67px" width="10" height="10"><path d="M1 1L9 9M9 1L1 9" stroke="#a9a9a9" stroke-width="1.2"/></svg>
<svg class="a" style="left:632px;top:64px" width="16" height="16"><circle cx="7" cy="9" r="6.8" fill="#84cfe0"/><path d="M9.2 6.7A2.9 2.9 0 1 0 9.2 11.3" fill="none" stroke="#3a3a3a" stroke-width="1.1"/><path d="M11 1.5L8.6 3.8L11 6Z" fill="#e5642e"/><path d="M12 1.5L14.5 3.8L12 6Z" fill="#59a869"/></svg>
<div class="t" style="left:651px;top:65px;color:#993300;letter-spacing:-0.17px">ProductsServiceTest.java</div>
<svg class="a" style="left:799px;top:67px" width="10" height="10"><path d="M1 1L9 9M9 1L1 9" stroke="#a9a9a9" stroke-width="1.2"/></svg>
<div class="a" style="left:414px;top:86px;width:857px;height:752px;overflow:hidden;background:#fff">
<div class="a" style="left:0px;top:0px;width:63px;height:752px;background:#f2f2f2;"></div>
<div class="a" style="left:63px;top:0px;width:1px;height:752px;background:#d9d9d9;"></div>
<div class="a" style="left:0px;top:105px;width:857px;height:21px;background:#fcfaed;"></div>
<div class="a" style="left:63px;top:105px;width:1px;height:21px;background:#d9d9d9;"></div>
<div class="a" style="left:69px;top:742px;width:661px;height:10px;background:#dcdcdc;"></div>
<div class="ln" style="top:1px">1</div>
<div class="cl" style="top:1px"><span class="k">package</span> com.ruoyi.ezpub.ezmodel.products;</div>
<div class="ln" style="top:22px">2</div>
<div class="cl" style="top:22px"></div>
<div class="ln" style="top:43px">3</div>
<div class="cl" style="top:43px"><span class="k">import</span> <span class="fd">...</span></div>
<div class="ln" style="top:64px">27</div>
<div class="cl" style="top:64px"></div>
<div class="ln" style="top:85px">28</div>
<div class="cl" style="top:85px"><span class="an">@ExtendWith</span>(MockitoExtension.<span class="k">class</span>)</div>
<div class="ln" style="top:106px">29</div>
<div class="cl" style="top:106px"><span class="k">public</span> <span class="k">class</span> <span class="hl"><span>ProductsServiceTest</span></span> {</div>
<div class="ln" style="top:127px">30</div>
<div class="cl" style="top:127px"></div>
<div class="ln" style="top:148px">31</div>
<div class="cl" style="top:148px">    <span class="k">protected</span> Log <span class="f">logger</span>= LogFactory.<span class="i">getLog</span>(<span class="hl"><span>ProductsServiceTest</span></span>.<span class="k">class</span>);</div>
<div class="ln" style="top:169px">32</div>
<div class="cl" style="top:169px"></div>
<div class="ln" style="top:190px">33</div>
<div class="cl" style="top:190px">    <span class="an">@Mock</span></div>
<div class="ln" style="top:211px">34</div>
<div class="cl" style="top:211px">    <span class="k">private</span> ProductsMapper <span class="f">productsMapper</span>;</div>
<div class="ln" style="top:232px">35</div>
<div class="cl" style="top:232px"></div>
<div class="ln" style="top:253px">36</div>
<div class="cl" style="top:253px">    <span class="an">@InjectMocks</span></div>
<div class="ln" style="top:274px">37</div>
<div class="cl" style="top:274px">    <span class="k">private</span> ProductsServiceImpl <span class="f">productsService</span>;</div>
<div class="ln" style="top:295px">38</div>
<div class="cl" style="top:295px"></div>
<div class="ln" style="top:316px">39</div>
<div class="cl" style="top:316px">    <span class="an">@BeforeEach</span></div>
<div class="ln" style="top:337px">40</div>
<div class="cl" style="top:337px">    <span class="k">public</span> <span class="k">void</span> <span class="md">setUp</span>()<span class="fd"> { </span>MockitoAnnotations.<span class="i">openMocks</span>(<span class="ih" style="width:63px">testClass:</span><span class="k">this</span>);<span class="fd"> }</span></div>
<div class="ln" style="top:358px">43</div>
<div class="cl" style="top:358px"></div>
<div class="ln" style="top:379px">44</div>
<div class="cl" style="top:379px">    <span class="k">public</span> <span class="k">void</span> <span class="md">wLogOk</span>(String msg)<span class="fd"> { </span><span class="f">logger</span>.info(<span class="s">"&gt;&gt;&gt;&gt;&gt;&gt;&gt; "</span>+msg);<span class="fd"> }</span></div>
<div class="ln" style="top:400px">47</div>
<div class="cl" style="top:400px"></div>
<div class="ln" style="top:421px">48</div>
<div class="cl" style="top:421px">    <span class="k">public</span> Products <span class="md">createNewItem</span>(Long id)<span class="fd">{...}</span></div>
<div class="ln" style="top:442px">53</div>
<div class="cl" style="top:442px"></div>
<div class="ln" style="top:463px">54</div>
<div class="cl" style="top:463px">    <span class="an">@Test</span></div>
<div class="ln" style="top:484px">55</div>
<div class="cl" style="top:484px">    <span class="k">public</span> <span class="k">void</span> <span class="md">testFindAll</span>() <span class="k">throws</span> <span class="g">Exception</span> {</div>
<div class="ln" style="top:505px">56</div>
<div class="cl" style="top:505px">        <span class="k">long</span> startTime = System.<span class="i">currentTimeMillis</span>();</div>
<div class="ln" style="top:526px">57</div>
<div class="cl" style="top:526px"></div>
<div class="ln" style="top:547px">58</div>
<div class="cl" style="top:547px">        Products products0 = createNewItem(<span class="ih" style="width:23px">id:</span><span class="k">null</span>);</div>
<div class="ln" style="top:568px">59</div>
<div class="cl" style="top:568px">        Products products1 = createNewItem(<span class="ih" style="width:23px">id:</span><span class="n">1L</span>);</div>
<div class="ln" style="top:589px">60</div>
<div class="cl" style="top:589px">        Products products2 = createNewItem(<span class="ih" style="width:23px">id:</span><span class="n">2L</span>);</div>
<div class="ln" style="top:610px">61</div>
<div class="cl" style="top:610px">        List&lt;Products&gt; <span class="g">productss</span> = Arrays.<span class="i">asList</span>(products1, products2);</div>
<div class="ln" style="top:631px">62</div>
<div class="cl" style="top:631px"></div>
<div class="ln" style="top:652px">63</div>
<div class="cl" style="top:652px">        <span class="i">when</span>(<span class="f">productsMapper</span>.selectProductsList(products0)).thenReturn(Arrays.<span class="i">asList</span>(products1, products2));</div>
<div class="ln" style="top:673px">64</div>
<div class="cl" style="top:673px"></div>
<div class="ln" style="top:694px">65</div>
<div class="cl" style="top:694px">        List&lt;Products&gt; result = <span class="f">productsService</span>.selectProductsList(products0);</div>
<div class="ln" style="top:715px">66</div>
<div class="cl" style="top:715px"></div>
<div class="ln" style="top:736px">67</div>
<div class="cl" style="top:736px">        <span class="i">assertEquals</span>(<span class="ih" style="width:64px">expected:</span><span class="n">2</span>, result.size());</div>
<svg class="a" style="left:35px;top:110px" width="11" height="11"><path d="M0.5 0L5.5 5L0.5 10Z" fill="#59a869"/><path d="M4.2 -0.5L9.7 5L4.2 10.5" fill="none" stroke="#fcfaed" stroke-width="1"/><path d="M5 0L10 5L5 10Z" fill="#59a869"/></svg>
<svg class="a" style="left:36px;top:488px" width="9" height="11"><path d="M0.5 0.5L8 5.5L0.5 10.5Z" fill="#59a869"/></svg>
<svg class="a" style="left:59px;top:48px" width="9" height="9"><rect x="0.5" y="0.5" width="8" height="8" fill="#fff" stroke="#c7c7c7"/><path d="M2 4.5H7M4.5 2V7" stroke="#9a9a9a" stroke-width="1"/></svg>
<svg class="a" style="left:59px;top:342px" width="9" height="9"><rect x="0.5" y="0.5" width="8" height="8" fill="#fff" stroke="#c7c7c7"/><path d="M2 4.5H7M4.5 2V7" stroke="#9a9a9a" stroke-width="1"/></svg>
<svg class="a" style="left:59px;top:384px" width="9" height="9"><rect x="0.5" y="0.5" width="8" height="8" fill="#fff" stroke="#c7c7c7"/><path d="M2 4.5H7M4.5 2V7" stroke="#9a9a9a" stroke-width="1"/></svg>
<svg class="a" style="left:59px;top:426px" width="9" height="9"><rect x="0.5" y="0.5" width="8" height="8" fill="#fff" stroke="#c7c7c7"/><path d="M2 4.5H7M4.5 2V7" stroke="#9a9a9a" stroke-width="1"/></svg>
<svg class="a" style="left:59px;top:490px" width="9" height="10"><path d="M0.5 0.5H8.5V6L4.5 9.5L0.5 6Z" fill="#fff" stroke="#c7c7c7"/><path d="M2 4H7" stroke="#9a9a9a" stroke-width="1"/></svg>
<svg class="a" style="left:78px;top:88px" width="12" height="17"><circle cx="5.3" cy="6.5" r="4.8" fill="#f0a30a"/><path d="M2.5 13.5H8.5M3 15.5H8" stroke="#606060" stroke-width="1"/></svg>
<div class="a" style="left:103px;top:503px;width:1px;height:249px;background:#e6e6e6;"></div>
<svg class="a" style="left:253px;top:623px" width="72" height="4"><path d="M0 3 L1 1 L3 3 L5 1 L7 3 L9 1 L11 3 L13 1 L15 3 L17 1 L19 3 L21 1 L23 3 L25 1 L27 3 L29 1 L31 3 L33 1 L35 3 L37 1 L39 3 L41 1 L43 3 L45 1 L47 3 L49 1 L51 3 L53 1 L55 3 L57 1 L59 3 L61 1 L63 3 L65 1 L67 3 L69 1 L71 3" fill="none" stroke="#a8d4a0" stroke-width="0.8"/></svg>
<div class="a" style="left:847px;top:16px;width:10px;height:229px;background:rgba(0,0,0,0.11);"></div>
<div class="a" style="left:845px;top:2px;width:10px;height:10px;background:#edc200;"></div>
<div class="a" style="left:843px;top:28px;width:14px;height:2px;background:#d9b400;"></div>
<div class="a" style="left:843px;top:48px;width:14px;height:2px;background:#b88fe6;"></div>
<div class="a" style="left:843px;top:60px;width:14px;height:2px;background:#b88fe6;"></div>
<div class="a" style="left:843px;top:164px;width:14px;height:2px;background:#d9b400;"></div>
<div class="a" style="left:843px;top:203px;width:14px;height:2px;background:#d9b400;"></div>
<div class="a" style="left:843px;top:292px;width:14px;height:2px;background:#d9b400;"></div>
<div class="a" style="left:843px;top:401px;width:14px;height:2px;background:#d9b400;"></div>
<div class="a" style="left:843px;top:503px;width:14px;height:2px;background:#d9b400;"></div>
<div class="a" style="left:843px;top:606px;width:14px;height:2px;background:#d9b400;"></div>
</div>
<div class="a" style="left:1271px;top:59px;width:1px;height:779px;background:#d6d6d6;"></div>
<div class="a" style="left:1272px;top:59px;width:21px;height:779px;background:#f2f2f2;"></div>
<div class="t" style="left:1288px;top:83px;font-size:12px;transform:rotate(90deg);transform-origin:0 0;">Ant</div>
<svg class="a" style="left:1276px;top:67px" width="12" height="12"><ellipse cx="6" cy="2.5" rx="2" ry="2" fill="#6e6e6e"/><ellipse cx="6" cy="6" rx="2.2" ry="1.8" fill="#6e6e6e"/><ellipse cx="6" cy="9.5" rx="2.6" ry="2.3" fill="#6e6e6e"/><path d="M1 3L4 5M11 3L8 5M0.5 7H4M11.5 7H8M1 11L4 9M11 11L8 9" stroke="#6e6e6e" stroke-width="1"/></svg>
<div class="t" style="left:1288px;top:139px;font-size:12px;transform:rotate(90deg);transform-origin:0 0;">Database</div>
<svg class="a" style="left:1276px;top:122px" width="12" height="14"><ellipse cx="6" cy="2.5" rx="5.5" ry="2" fill="#6e6e6e"/><path d="M0.5 4.5C0.5 7 11.5 7 11.5 4.5V6.5C11.5 9 0.5 9 0.5 6.5Z M0.5 8C0.5 10.5 11.5 10.5 11.5 8V10C11.5 12.5 0.5 12.5 0.5 10Z" fill="#6e6e6e"/></svg>
<div class="t" style="left:1288px;top:224px;font-size:12px;transform:rotate(90deg);transform-origin:0 0;">Maven</div>
<div class="a" style="left:1275px;top:205px;font-family:&quot;Liberation Sans&quot;;font-style:italic;font-weight:bold;font-size:16px;color:#6e6e6e;line-height:16px">m</div>
<div class="t" style="left:1288px;top:299px;font-size:12px;transform:rotate(90deg);transform-origin:0 0;">Bean Validation</div>
<svg class="a" style="left:1276px;top:284px" width="13" height="13"><circle cx="6.5" cy="6.5" r="6" fill="#6e6e6e"/><path d="M3 6L6 9L11 3" fill="none" stroke="#f2f2f2" stroke-width="1.6"/></svg>
<div class="a" style="left:1px;top:838px;width:1292px;height:1px;background:#cdcdcd;"></div>
<div class="a" style="left:1px;top:839px;width:1292px;height:21px;background:#f2f2f2;"></div>
<div class="a" style="left:1px;top:860px;width:1292px;height:1px;background:#d6d6d6;"></div>
<div class="a" style="left:1px;top:861px;width:1292px;height:20px;background:#f2f2f2;"></div>
<svg class="a" style="left:33px;top:843px" width="12" height="13"><path d="M2 1V12.5" stroke="#6e6e6e" stroke-width="1.8"/><path d="M2 8H8V3" fill="none" stroke="#6e6e6e" stroke-width="1.6"/><path d="M8 0L11.5 3.8H4.5Z" fill="#6e6e6e"/></svg>
<div class="t" style="left:48px;top:843px;font-size:11.5px"><u>9</u>: Git</div>
<svg class="a" style="left:97px;top:844px" width="12" height="11"><path d="M1 1.5H2.5M1 5H2.5M1 8.5H2.5M4 1.5H11M4 5H11M4 8.5H11" stroke="#6e6e6e" stroke-width="1.5"/></svg>
<div class="t" style="left:112px;top:843px;font-size:11.5px"><u>6</u>: TODO</div>
<svg class="a" style="left:179px;top:844px" width="9" height="11"><path d="M0.5 0.5L8.5 5.5L0.5 10.5Z" fill="#6e6e6e"/></svg>
<div class="t" style="left:194px;top:843px;font-size:11.5px"><u>4</u>: Run</div>
<svg class="a" style="left:249px;top:843px" width="12" height="12"><rect x="0" y="0.5" width="11" height="11" fill="#6e6e6e"/><path d="M2.5 3L5 5L2.5 7M5.5 8.5H9" fill="none" stroke="#fff" stroke-width="1.1"/></svg>
<div class="t" style="left:265px;top:843px;font-size:11.5px">Terminal</div>
<svg class="a" style="left:330px;top:843px" width="14" height="13"><path d="M0.5 5L6 0L8.5 2.5L3 7.5Z" fill="#6e6e6e"/><path d="M5 4.5L12.5 12" stroke="#6e6e6e" stroke-width="2.6"/></svg>
<div class="t" style="left:347px;top:843px;font-size:11.5px">Build</div>
<svg class="a" style="left:396px;top:843px" width="14" height="13"><path d="M0.5 0.5H9V3H3V11H0.5Z" fill="#6e6e6e"/><rect x="4" y="4.5" width="9" height="8" fill="#fff" stroke="#6e6e6e"/><path d="M6 7H8M9.5 7H11M6 9.5H8M9.5 9.5H11" stroke="#6e6e6e" stroke-width="1"/></svg>
<div class="t" style="left:411px;top:843px;font-size:11.5px">Java Enterprise</div>
<svg class="a" style="left:512px;top:844px" width="14" height="11"><path d="M0.5 9C0.5 4 4 1.5 8 1.5C10 1.5 12 1 13.5 0C13.5 5 11 9.5 5 9.5C3.5 9.5 2 9.3 0.5 10.5Z" fill="#6e6e6e"/><path d="M2 9C4 6 7 4.5 10 3.5" fill="none" stroke="#f2f2f2" stroke-width="0.9"/></svg>
<div class="t" style="left:529px;top:843px;font-size:11.5px">Spring</div>
<svg class="a" style="left:584px;top:845px" width="13" height="11"><path d="M0 1H12M0 4.5H9M0 8H7" stroke="#6e6e6e" stroke-width="1.4"/></svg>
<div class="t" style="left:601px;top:843px;font-size:11.5px"><u>0</u>: Messages</div>
<svg class="a" style="left:1191px;top:843px" width="15" height="15"><path d="M13 13H7A6 6 0 1 1 13 7Z" fill="none" stroke="#6e6e6e" stroke-width="1.3"/></svg>
<div class="t" style="left:1209px;top:843px;font-size:11.5px">Event Log</div>
<svg class="a" style="left:6px;top:864px" width="14" height="14"><rect x="3.5" y="0.5" width="9.5" height="9.5" fill="none" stroke="#6e6e6e" stroke-width="1"/><path d="M0.5 3.5V13H10" fill="none" stroke="#6e6e6e" stroke-width="1"/></svg>
<div class="t" style="left:29px;top:863px;">Build completed successfully in 2 s 509 ms (today 18:30)</div>
<div class="t" style="left:1001px;top:863px;">29:14</div>
<div class="t" style="left:1044px;top:863px;">LF</div>
<div class="t" style="left:1068px;top:863px;">UTF-8</div>
<div class="t" style="left:1113px;top:863px;">4 spaces</div>
<svg class="a" style="left:1178px;top:864px" width="12" height="14"><path d="M2.5 1.5V12" stroke="#6e6e6e" stroke-width="1.6"/><circle cx="2.5" cy="1.8" r="1.5" fill="#6e6e6e"/><circle cx="2.5" cy="12" r="1.5" fill="#6e6e6e"/><circle cx="9" cy="3.5" r="1.5" fill="#6e6e6e"/><path d="M9 4V7H2.5" fill="none" stroke="#6e6e6e" stroke-width="1.6"/></svg>
<div class="t" style="left:1194px;top:863px;">master</div>
<svg class="a" style="left:1244px;top:865px" width="12" height="12"><rect x="3" y="5" width="8" height="6" fill="#6e6e6e"/><path d="M1 5V3A2.2 2.2 0 0 1 5.4 3V5.5" fill="none" stroke="#6e6e6e" stroke-width="1.4"/></svg>
<svg class="a" style="left:1269px;top:864px" width="13" height="13"><path d="M3.5 0.5H9.5L10 4H3Z" fill="#6e6e6e"/><path d="M0 4.5H13" stroke="#6e6e6e" stroke-width="1.3"/><path d="M3.5 5.5H9.5V9C9.5 10.5 8 11 6.5 11C5 11 3.5 10.5 3.5 9Z" fill="none" stroke="#6e6e6e" stroke-width="1.2"/><path d="M1 13C1.5 11 3 10.5 4 10.5H9C10 10.5 11.5 11 12 13Z" fill="#6e6e6e"/></svg>
</body></html>
